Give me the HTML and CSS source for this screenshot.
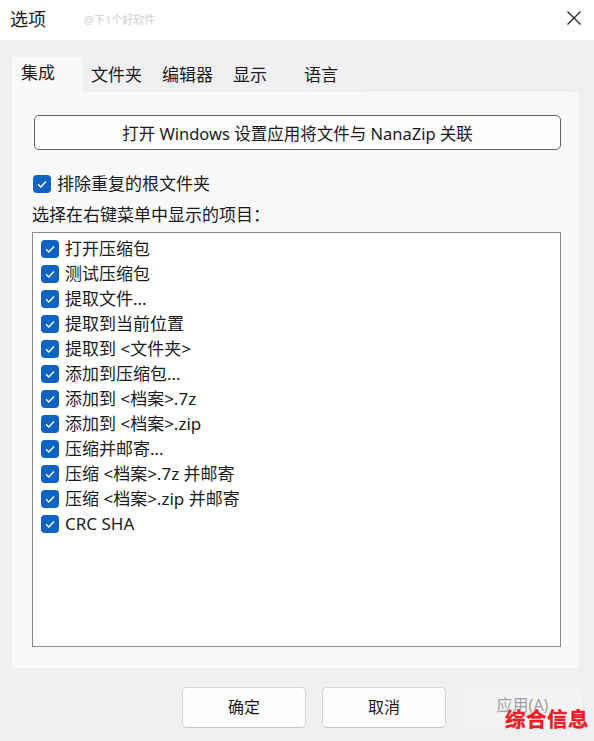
FILE: index.html
```html
<!DOCTYPE html>
<html lang="zh-CN">
<head>
  <meta charset="UTF-8">
  <title>选项</title>
  <link rel="stylesheet" href="styles.css">
</head>
<body>
  <div class="window">
    <div class="titlebar">
      <span class="title">选项</span>
      <span class="mark">@下1个好软件</span>
      <svg class="close" width="16" height="16" viewBox="0 0 16 16">
        <path d="M1.5 1.5 L14.5 14.5 M14.5 1.5 L1.5 14.5" stroke="#222" stroke-width="1.3" fill="none"/>
      </svg>
    </div>
    <div class="content">
      <div class="tabs">
        <div class="tab active">集成</div>
        <div class="tab">文件夹</div>
        <div class="tab">编辑器</div>
        <div class="tab">显示</div>
        <div class="tab">语言</div>
        <div class="tab-fill"></div>
      </div>
      <div class="panel">
        <button class="assoc">打开 Windows 设置应用将文件与 NanaZip 关联</button>
        <label class="check first"><span class="box"></span>排除重复的根文件夹</label>
        <div class="caption">选择在右键菜单中显示的项目：</div>
        <div class="list">
          <label class="check"><span class="box"></span>打开压缩包</label>
          <label class="check"><span class="box"></span>测试压缩包</label>
          <label class="check"><span class="box"></span>提取文件...</label>
          <label class="check"><span class="box"></span>提取到当前位置</label>
          <label class="check"><span class="box"></span>提取到 &lt;文件夹&gt;</label>
          <label class="check"><span class="box"></span>添加到压缩包...</label>
          <label class="check"><span class="box"></span>添加到 &lt;档案&gt;.7z</label>
          <label class="check"><span class="box"></span>添加到 &lt;档案&gt;.zip</label>
          <label class="check"><span class="box"></span>压缩并邮寄...</label>
          <label class="check"><span class="box"></span>压缩 &lt;档案&gt;.7z 并邮寄</label>
          <label class="check"><span class="box"></span>压缩 &lt;档案&gt;.zip 并邮寄</label>
          <label class="check"><span class="box"></span>CRC SHA</label>
        </div>
      </div>
      <div class="footer">
        <button class="btn">确定</button>
        <button class="btn">取消</button>
        <button class="btn disabled">应用(A)</button>
      </div>
    </div>
    <div class="stamp">综合信息</div>
  </div>
</body>
</html>
```

FILE: styles.css
```css
body {
  margin: 0;
  padding: 0;
  background-color: #f0f0f2;
  font-family: "Noto Sans", "Noto Sans CJK SC", sans-serif;
  color: #1b1b1b;
}
.window {
  position: relative;
  width: 594px;
  height: 741px;
  overflow: hidden;
}
.titlebar {
  height: 40px;
  background-color: #fff;
  display: flex;
  align-items: center;
  padding: 0 12px 0 10px;
}
.title {
  font-size: 18px;
  line-height: 24px;
  margin-top: -3px;
}
.mark {
  font-size: 11px;
  color: #d0d0d0;
  margin-left: 38px;
  margin-top: -2px;
}
.close {
  margin-left: auto;
  margin-top: -4px;
}
.content {
  padding: 17px 16px 0 12px;
}
.tabs {
  display: flex;
  height: 35px;
  align-items: stretch;
}
.tab {
  font-size: 17px;
  line-height: 35px;
  width: 71px;
  box-sizing: border-box;
  padding-left: 9px;
}
.tab.active {
  background-color: #f9f9fa;
  width: 70px;
  line-height: 32px;
}
.tab-fill {
  flex: 1;
  border-bottom: 1px solid #e2e2e4;
  margin: 0 8px 2px 0;
}
.panel {
  background-color: #f9f9fa;
  height: 576px;
  padding: 23px 0 0 20px;
  box-sizing: border-box;
}
.assoc {
  display: block;
  width: 527px;
  height: 35px;
  margin-left: 2px;
  background-color: #fcfcfd;
  border: 1.5px solid #5c6168;
  border-radius: 5px;
  font-family: inherit;
  font-size: 16.5px;
  color: #1b1b1b;
  padding: 0;
}
.check {
  display: flex;
  align-items: center;
  font-size: 17px;
  height: 25px;
  line-height: 25px;
}
.check.first {
  margin: 21px 0 0 1px;
}
.box {
  width: 18px;
  height: 18px;
  border-radius: 4px;
  background-color: #0f63c0;
  margin-right: 6px;
  background-image: url("data:image/svg+xml,%3Csvg xmlns='http://www.w3.org/2000/svg' width='18' height='18'%3E%3Cpath d='M5 9.3 L7.8 12 L13 6.5' stroke='white' stroke-width='1.4' fill='none'/%3E%3C/svg%3E");
  flex-shrink: 0;
}
.caption {
  font-size: 17px;
  line-height: 25px;
  margin: 6px 0 0 0;
}
.list {
  width: 529px;
  height: 415px;
  box-sizing: border-box;
  margin-top: 5px;
  background-color: #fff;
  border: 1.5px solid #8a8a8e;
  padding: 3px 0 0 8px;
}
.footer {
  display: flex;
  justify-content: flex-end;
  gap: 16px;
  padding: 19px 0 0 0;
  margin-right: -5px;
}
.btn {
  width: 124px;
  height: 41px;
  background-color: #fdfdfd;
  border: 1px solid #d6d6d8;
  border-bottom-color: #c4c4c6;
  border-radius: 5px;
  font-family: inherit;
  font-size: 16px;
  color: #1b1b1b;
  padding: 0 0 4px 0;
}
.btn.disabled {
  background-color: #f4f4f6;
  border-color: #f0f0f2;
  color: #a0a0a0;
  width: 121px;
  padding-bottom: 8px;
}
.stamp {
  position: absolute;
  left: 505px;
  top: 705px;
  font-size: 20.5px;
  font-weight: bold;
  color: #ee1c25;
  line-height: 28px;
  letter-spacing: 0.5px;
  -webkit-text-stroke: 0.4px #ee1c25;
  text-shadow: 0 0 2px #fff;
}
```
